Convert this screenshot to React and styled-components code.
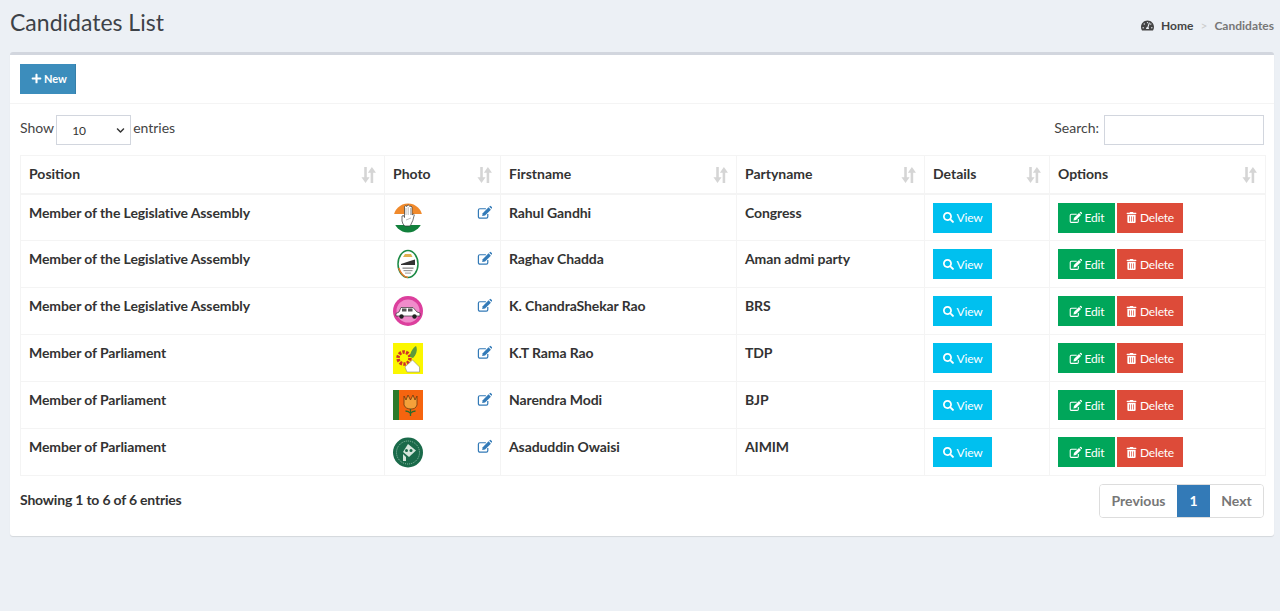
import React from 'react';
import styled, { createGlobalStyle } from 'styled-components';
import { FaPlus, FaSearch, FaTrashAlt, FaTachometerAlt, FaChevronDown } from 'react-icons/fa';

const GlobalStyle = createGlobalStyle`
    *{ box-sizing:border-box; }
    html,body{ margin:0; padding:0; }
    body{
        background:#ecf0f5;
        color:#333;
        font-family:Lato,"Noto Sans",sans-serif;
        font-size:14px;
        height:611px;
        overflow:hidden;
    }
`

// pencil-square-o, the package's FaRegEdit has an outlined pencil
const EditIcon = ({size}) => (
    <svg width={size} height={size} viewBox="0 0 16 15" fill="currentColor">
        <path d="M11.500 9.200v2.800a1.500 1.500 0 0 1-1.500 1.500H3A1.500 1.500 0 0 1 1.500 12V5A1.500 1.500 0 0 1 3 3.500h6.500" fill="none" stroke="currentColor" strokeWidth="1.300" />
        <path d="M5.500 11.200l.6-3L12.300 2l2.500 2.500-6.200 6.100z" />
        <path d="M13 1.300l.6-.6a1 1 0 0 1 1.300 0l1 1a1 1 0 0 1 0 1.300l-.5.600z" />
    </svg>
)

const Congress = () => (
    <svg width="30" height="30" viewBox="0 0 30 30">
        <defs><clipPath id="cg"><circle cx="15" cy="15" r="14.500" /></clipPath></defs>
        <g clipPath="url(#cg)">
            <rect width="30" height="11" fill="#f08a2c" />
            <rect y="11" width="30" height="11" fill="#fff" />
            <rect y="22" width="30" height="8" fill="#12803c" />
        </g>
        <path d="M9 18v-5l1.500-.5 1 2V3.500l1.300-.8 1 .8.200-1 1.300-.5 1 .8.500.700 1.200-.5 1 1v8l1.300-1 1 .8-1.500 5.700-2 4.200-1 1.300h-5L10 21z" fill="#fff" stroke="#333" strokeWidth=".7" />
        <path d="M13 5v7M15.200 4v8M17.500 5v7M13 17l5-2" stroke="#777" strokeWidth=".5" fill="none" />
    </svg>
)

const Aap = () => (
    <svg width="30" height="30" viewBox="0 0 30 30">
        <ellipse cx="15" cy="15" rx="10" ry="13.500" fill="#fff" stroke="#1c8a45" strokeWidth="1.500" />
        <path d="M5.800 19c2 6 5 9 9.200 9.500" fill="none" stroke="#e8772b" strokeWidth="1.500" />
        <path d="M10 8l2-3h6l1.500 3z" fill="#e0b050" />
        <path d="M8 15l9-3 5-1.500V16H8z" fill="#333" />
        <rect x="9.500" y="18.500" width="11" height="1.300" fill="#888" />
        <rect x="10.500" y="21" width="9" height="1.200" fill="#999" />
        <rect x="12" y="23.500" width="6" height="1.200" fill="#aaa" />
    </svg>
)

const Brs = () => (
    <svg width="30" height="30" viewBox="0 0 30 30">
        <circle cx="15" cy="15" r="15" fill="#dc3f9d" />
        <circle cx="15" cy="15" r="11.500" fill="#f08ccb" />
        <path d="M3 17.500l3-1.500 2-4.500h12l4 4.500 3 1v3H3z" fill="#fff" stroke="#333" strokeWidth=".7" />
        <rect x="9" y="12.500" width="4.500" height="3" fill="#555" />
        <rect x="15" y="12.500" width="4.500" height="3" fill="#555" />
        <circle cx="8.500" cy="20.500" r="2.200" fill="#222" />
        <circle cx="21.500" cy="20.500" r="2.200" fill="#222" />
    </svg>
)

const Tdp = () => (
    <svg width="30" height="31" viewBox="0 0 30 31">
        <rect width="30" height="31" fill="#fbf700" />
        <circle cx="11" cy="15" r="6" fill="none" stroke="#cf3328" strokeWidth="3.500" strokeDasharray="2.500 1.200" />
        <path d="M12 24l7.500-7 7 7v5H14z" fill="#fff" stroke="#888" strokeWidth=".6" />
        <path d="M17 14c0-5 3-9 6-11 2 4 0 9-3 12z" fill="#5b9a3c" />
    </svg>
)

const Bjp = () => (
    <svg width="30" height="30" viewBox="0 0 30 30">
        <rect width="30" height="30" fill="#f6640f" />
        <rect width="6" height="30" fill="#2c7a2a" />
        <path d="M11 6l2 4 2-5 2.500 5L20 5l2 5 2-4v9c-1 3-3 4-6 4s-6-1-7-4z" fill="#f4a13a" stroke="#6a3a10" strokeWidth=".8" />
        <path d="M17.500 19v7M12.500 21c2 0 4 1 5 2.500 1-1.500 3-2.500 5-2.500" fill="none" stroke="#2c6a2a" strokeWidth="1.300" />
    </svg>
)

const Aimim = () => (
    <svg width="30" height="31" viewBox="0 0 30 31">
        <circle cx="15" cy="15.500" r="15" fill="#1a6a4a" />
        <circle cx="15" cy="15.500" r="11.500" fill="none" stroke="#9cc7b1" strokeWidth=".9" strokeDasharray="1 1" />
        <path d="M15 7l8 6.500-7 6.500-6-5z" fill="#d6e6dc" />
        <circle cx="13.500" cy="13.500" r="1.500" fill="#1a6a4a" />
        <circle cx="18" cy="13.500" r="1.500" fill="#1a6a4a" />
        <path d="M10 17v7h3v-4z" fill="#d6e6dc" />
    </svg>
)

const rows = [
    { id:1, position:'Member of the Legislative Assembly', name:'Rahul Gandhi', party:'Congress', Logo:Congress },
    { id:2, position:'Member of the Legislative Assembly', name:'Raghav Chadda', party:'Aman admi party', Logo:Aap },
    { id:3, position:'Member of the Legislative Assembly', name:'K. ChandraShekar Rao', party:'BRS', Logo:Brs },
    { id:4, position:'Member of Parliament', name:'K.T Rama Rao', party:'TDP', Logo:Tdp },
    { id:5, position:'Member of Parliament', name:'Narendra Modi', party:'BJP', Logo:Bjp },
    { id:6, position:'Member of Parliament', name:'Asaduddin Owaisi', party:'AIMIM', Logo:Aimim },
];

const columns = [
    { label:'Position', width:364 },
    { label:'Photo', width:116 },
    { label:'Firstname', width:236 },
    { label:'Partyname', width:188 },
    { label:'Details', width:125 },
    { label:'Options', width:216 },
];

const SortIcon = () => (
    <SortSvg viewBox="0 0 14 15">
        <path d="M3 0h2.400v9.500H8L4.200 15 .4 9.500H3z" />
        <path d="M9 15h2.400V5.500H14L10.200 0 6.400 5.500H9z" />
    </SortSvg>
)

const App = () => {
    return(
        <Page>
            <GlobalStyle />
            <Header>
                <Title>Candidates List</Title>
                <Crumbs>
                    <FaTachometerAlt size={13} />
                    <CrumbHome>Home</CrumbHome>
                    <CrumbSep>&gt;</CrumbSep>
                    <CrumbCurrent>Candidates</CrumbCurrent>
                </Crumbs>
            </Header>
            <Box>
                <BoxHeader>
                    <NewButton><FaPlus size={11} /> New</NewButton>
                </BoxHeader>
                <BoxBody>
                    <Controls>
                        <Label>
                            <LabelText>Show</LabelText>
                            <SelectBox>
                                <span>10</span>
                                <FaChevronDown size={9} />
                            </SelectBox>
                            <LabelText>entries</LabelText>
                        </Label>
                        <Label>
                            <LabelText>Search:</LabelText>
                            <SearchInput />
                        </Label>
                    </Controls>
                    <Table>
                        <colgroup>
                            {columns.map(c => <Col key={c.label} $w={c.width} />)}
                        </colgroup>
                        <thead>
                            <tr>
                                {columns.map(c => (
                                    <Th key={c.label}>{c.label}<SortIcon /></Th>
                                ))}
                            </tr>
                        </thead>
                        <tbody>
                            {rows.map(r => (
                                <tr key={r.id}>
                                    <Td>{r.position}</Td>
                                    <Td>
                                        <PhotoCell>
                                            <LogoWrap><r.Logo /></LogoWrap>
                                            <EditLink><EditIcon size={15} /></EditLink>
                                        </PhotoCell>
                                    </Td>
                                    <Td>{r.name}</Td>
                                    <Td>{r.party}</Td>
                                    <Td>
                                        <Actions>
                                            <ActionButton $bg="#00c0ef" $w={59}><FaSearch size={11} /> View</ActionButton>
                                        </Actions>
                                    </Td>
                                    <Td>
                                        <Actions>
                                            <ActionButton $bg="#00a65a" $w={57}><EditIcon size={13} /> Edit</ActionButton>
                                            <ActionButton $bg="#dd4b39" $w={66}><FaTrashAlt size={11} /> Delete</ActionButton>
                                        </Actions>
                                    </Td>
                                </tr>
                            ))}
                        </tbody>
                    </Table>
                    <Footer>
                        <Info>Showing 1 to 6 of 6 entries</Info>
                        <Pager>
                            <PageItem $w={77}>Previous</PageItem>
                            <PageItem $w={33} $active>1</PageItem>
                            <PageItem $w={53}>Next</PageItem>
                        </Pager>
                    </Footer>
                </BoxBody>
            </Box>
        </Page>
    )
}

const Page = styled.div`
    padding:0 6px 0 10px;
`
const Header = styled.div`
    display:flex;
    justify-content:space-between;
    align-items:center;
    height:52px;
    padding-bottom:8px;
`
const Title = styled.h1`
    margin:0;
    font-size:23px;
    font-weight:400;
    color:#3d4248;
`
const Crumbs = styled.div`
    display:flex;
    align-items:center;
    gap:7px;
    font-size:12px;
    font-weight:700;
    color:#444;
    padding-top:6px;
`
const CrumbHome = styled.span`
    margin-left:0;
`
const CrumbSep = styled.span`
    color:#ccc;
    font-weight:400;
`
const CrumbCurrent = styled.span`
    color:#777;
`
const Box = styled.div`
    background:#fff;
    border-top:3px solid #d2d6de;
    border-radius:3px;
    box-shadow:0 1px 1px rgba(0,0,0,0.1);
    height:484px;
`
const BoxHeader = styled.div`
    padding:9px 10px;
    height:49px;
    border-bottom:1px solid #f4f4f4;
`
const NewButton = styled.button`
    display:inline-flex;
    align-items:center;
    gap:2px;
    height:30px;
    width:56px;
    padding:0 0 2px 11px;
    border:1px solid #367fa9;
    border-width:0 1px 0 0;
    background:#3c8dbc;
    color:#fff;
    font-family:inherit;
    font-size:11px;
    font-weight:700;
`
const BoxBody = styled.div`
    padding:10px 10px 0;
`
const Controls = styled.div`
    display:flex;
    justify-content:space-between;
    align-items:center;
    height:32px;
    margin-bottom:9px;
`
const Label = styled.label`
    display:flex;
    align-items:center;
    gap:2px;
    font-size:14px;
    color:#444;
`
const LabelText = styled.span`
    margin-bottom:6px;
`
const SelectBox = styled.div`
    display:flex;
    align-items:center;
    justify-content:space-between;
    width:75px;
    height:30px;
    padding:0 5px 0 15px;
    border:1px solid #d2d6de;
    font-size:12px;
    color:#333;
`
const SearchInput = styled.input`
    width:160px;
    height:30px;
    border:1px solid #d2d6de;
    margin-left:3px;
`
const Table = styled.table`
    width:1245px;
    table-layout:fixed;
    border-collapse:collapse;
    border:1px solid #f4f4f4;
`
const Col = styled.col`
    width:${p => p.$w}px;
`
const Th = styled.th`
    position:relative;
    height:38px;
    padding:0 8px 2px;
    text-align:left;
    font-size:14px;
    font-weight:700;
    color:#333;
    border:1px solid #f4f4f4;
    border-bottom:2px solid #f4f4f4;
`
const SortSvg = styled.svg`
    position:absolute;
    right:8px;
    top:11px;
    width:15px;
    height:16px;
    fill:#d5d5d5;
`
const Td = styled.td`
    height:47px;
    padding:8px 8px 0;
    vertical-align:top;
    font-size:14px;
    font-weight:700;
    line-height:19px;
    letter-spacing:-0.1px;
    color:#333;
    border:1px solid #f4f4f4;
`
const PhotoCell = styled.div`
    display:flex;
    justify-content:space-between;
    align-items:flex-start;
`
const LogoWrap = styled.div`
    width:30px;
    height:30px;
    line-height:0;
`
const EditLink = styled.span`
    color:#337ab7;
    line-height:0;
    margin-top:2px;
`
const Actions = styled.div`
    display:flex;
    gap:2px;
`
const ActionButton = styled.button`
    display:inline-flex;
    align-items:center;
    justify-content:center;
    gap:3px;
    height:30px;
    width:${p => p.$w}px;
    padding:0;
    border:0;
    background:${p => p.$bg};
    color:#fff;
    font-family:inherit;
    font-size:12px;
    font-weight:400;
    letter-spacing:-0.2px;
`
const Footer = styled.div`
    display:flex;
    justify-content:space-between;
    align-items:flex-start;
    margin-top:8px;
`
const Info = styled.div`
    font-size:14px;
    font-weight:700;
    letter-spacing:-0.2px;
    color:#333;
    padding-top:7px;
`
const Pager = styled.div`
    display:flex;
    height:34px;
    border:1px solid #ddd;
    border-radius:4px;
    overflow:hidden;
`
const PageItem = styled.span`
    display:flex;
    align-items:center;
    justify-content:center;
    width:${p => p.$w}px;
    padding-bottom:2px;
    font-size:14px;
    font-weight:700;
    background:${p => p.$active ? '#337ab7' : '#fff'};
    color:${p => p.$active ? '#fff' : '#777'};
`

export default App
